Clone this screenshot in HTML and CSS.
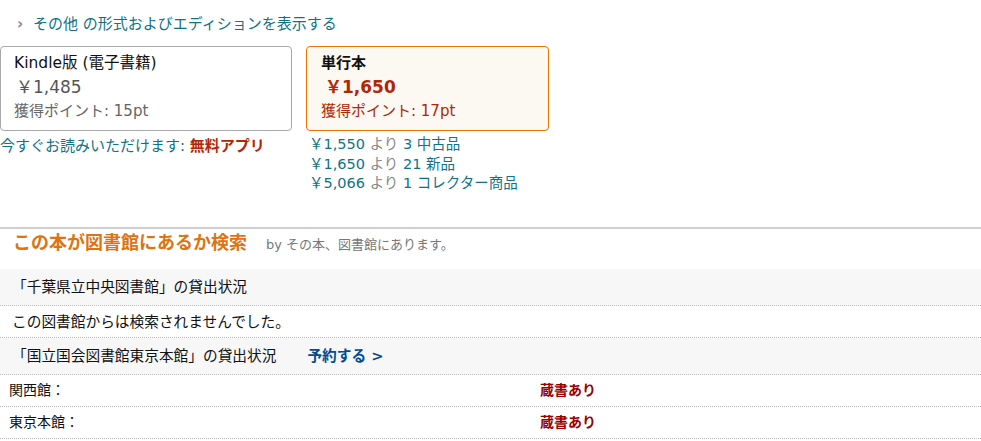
FILE: index.html
```html
<!DOCTYPE html>
<html lang="ja">
<head>
<meta charset="utf-8">
<title>Formats and library</title>
<link rel="stylesheet" href="styles.css">
</head>
<body>
<section class="formats">
  <a class="more" href="#"><span class="chev">›</span>その他 の形式およびエディションを表示する</a>
  <div class="boxes">
    <div class="col col-kindle">
      <div class="box">
        <div class="title">Kindle版 (電子書籍)</div>
        <div class="price">￥1,485</div>
        <div class="points">獲得ポイント: 15pt</div>
      </div>
      <div class="app">今すぐお読みいただけます: <b>無料アプリ</b></div>
    </div>
    <div class="col col-book">
      <div class="box sel">
        <div class="title bold">単行本</div>
        <div class="price">￥1,650</div>
        <div class="points">獲得ポイント: 17pt</div>
      </div>
      <ul class="offers">
        <li><a href="#">￥1,550</a> <span class="grey">より</span> <a href="#">3 中古品</a></li>
        <li><a href="#">￥1,650</a> <span class="grey">より</span> <a href="#">21 新品</a></li>
        <li><a href="#">￥5,066</a> <span class="grey">より</span> <a href="#">1 コレクター商品</a></li>
      </ul>
    </div>
  </div>
</section>
<section class="lib">
  <div class="lib-head">
    <h3>この本が図書館にあるか検索</h3>
    <span class="by">by その本、図書館にあります。</span>
  </div>
  <div class="row shade">「千葉県立中央図書館」の貸出状況</div>
  <div class="row plain">この図書館からは検索されませんでした。</div>
  <div class="row shade">「国立国会図書館東京本館」の貸出状況<a class="reserve" href="#">予約する &gt;</a></div>
  <div class="row branch"><span class="bname">関西館：</span><span class="stock">蔵書あり</span></div>
  <div class="row branch"><span class="bname">東京本館：</span><span class="stock">蔵書あり</span></div>
</section>
</body>
</html>
```

FILE: styles.css
```css
* { box-sizing: border-box; }
html, body { margin: 0; padding: 0; background: #fff; }
body {
  font-family: "DejaVu Sans", "Noto Sans CJK JP", sans-serif;
  font-size: 14px;
  color: #111;
  width: 981px;
  height: 441px;
  overflow: hidden;
}
a { text-decoration: none; }

.formats { padding-top: 14px; }
.more {
  display: block;
  color: #0f7386;
  font-size: 15px;
  line-height: 20px;
  padding-left: 17px;
}
.chev {
  display: inline-block;
  color: #888;
  font-size: 15px;
  font-weight: bold;
  width: 16px;
}
.boxes {
  display: flex;
  gap: 14px;
  margin-top: 12px;
}
.col-kindle { width: 292px; }
.col-book { width: 243px; }
.box {
  border: 1px solid #a9a9a9;
  border-radius: 4px;
  height: 85px;
  padding: 4px 13px 0 13px;
  font-size: 15px;
}
.box .title, .box .price, .box .points { line-height: 24px; white-space: nowrap; }
.box .title { font-size: 15.5px; }
.box .price { font-size: 17px; color: #555; padding-left: 2px; }
.box .points { color: #666; }
.box.sel {
  border-color: #e77600;
  background: #fcf8f2;
  padding-left: 14px;
}
.box.sel .bold { font-weight: bold; font-size: 15px; }
.box.sel .price { color: #b12704; font-weight: bold; padding-left: 4px; }
.box.sel .points { color: #b12704; }

.app {
  margin-top: 5px;
  line-height: 20px;
  font-size: 15px;
  color: #0f7386;
  white-space: nowrap;
}
.app b { color: #b12704; }

.offers {
  list-style: none;
  margin: 4px 0 0 0;
  padding: 0 0 0 3px;
  font-size: 14.5px;
  line-height: 19.5px;
  white-space: nowrap;
}
.offers a { color: #0f7386; }
.offers .grey { color: #888; }

.lib {
  margin-top: 33px;
  border-top: 2px solid #d0d0d0;
}
.lib-head {
  display: flex;
  align-items: baseline;
  gap: 19px;
  padding: 2px 0 12px 13px;
  line-height: 24px;
}
.lib-head h3 {
  margin: 0;
  font-size: 18px;
  font-weight: bold;
  color: #dd7311;
}
.by { font-size: 13px; color: #777; }

.row {
  border-bottom: 1px dotted #bdbdbd;
  font-size: 14.7px;
  white-space: nowrap;
}
.row.shade {
  background: #f7f7f7;
  padding: 8px 12px;
  line-height: 20px;
  height: 37px;
}
.row.plain { padding: 5px 12px; line-height: 21px; height: 32px; }
.row.branch {
  display: grid;
  grid-template-columns: 531px auto;
  padding: 5px 9px;
  line-height: 21px;
  height: 32px;
  font-size: 14px;
}
.reserve {
  color: #004b91;
  font-weight: bold;
  margin-left: 31px;
}
.stock { color: #990000; font-weight: bold; }
```
